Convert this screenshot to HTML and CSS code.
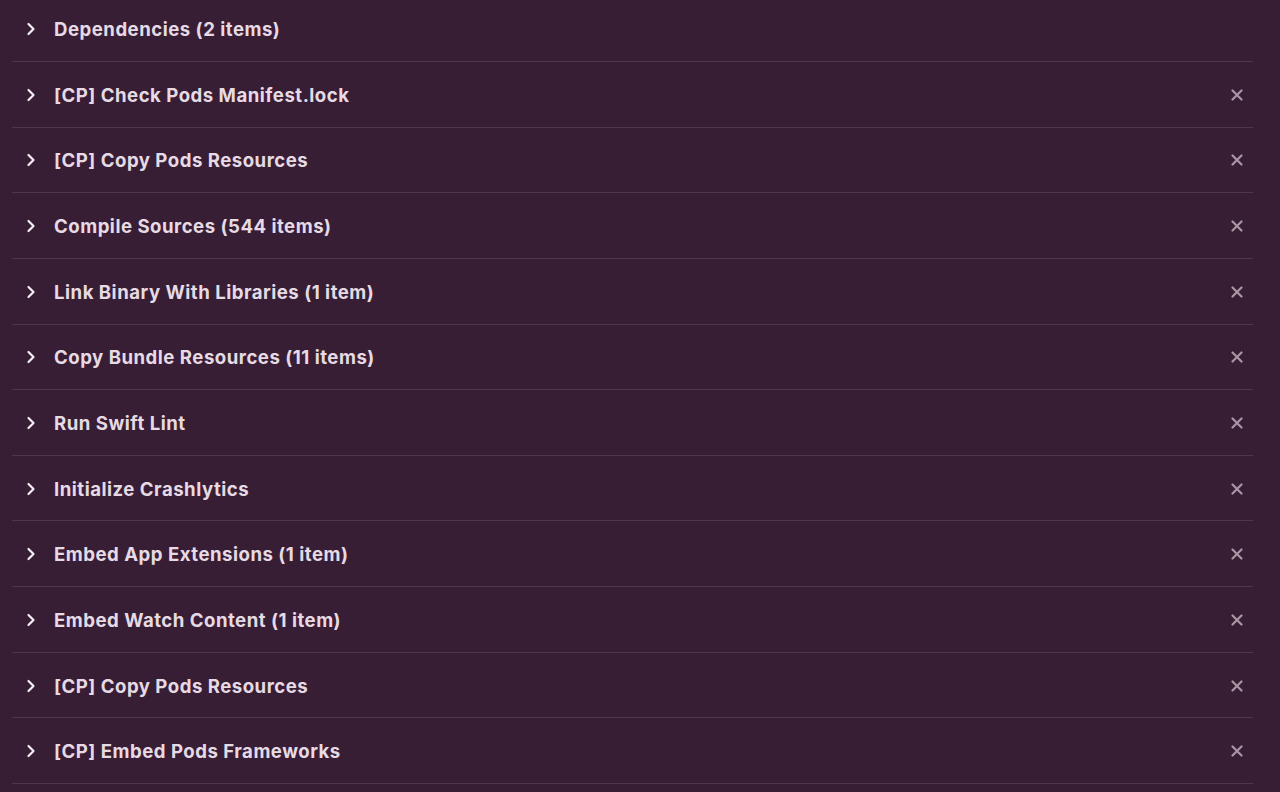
FILE: index.html
```
<!DOCTYPE html>
<html>
<head>
<meta charset="utf-8">
<link rel="stylesheet" href="styles.css">
</head>
<body>
<ul class="phases">
  <li class="phase first"><span class="chev"><svg viewBox="0 0 10 14" width="10" height="14"><path d="M2.5 2 L7.5 7 L2.5 12" fill="none" stroke="currentColor" stroke-width="2.2" stroke-linecap="round" stroke-linejoin="round"/></svg></span><span class="title">Dependencies (2 items)</span></li>
  <li class="phase"><span class="chev"><svg viewBox="0 0 10 14" width="10" height="14"><path d="M2.5 2 L7.5 7 L2.5 12" fill="none" stroke="currentColor" stroke-width="2.2" stroke-linecap="round" stroke-linejoin="round"/></svg></span><span class="title">[CP] Check Pods Manifest.lock</span><span class="close"><svg viewBox="0 0 12 12" width="12" height="12"><path d="M1.5 1.5 L10.5 10.5 M10.5 1.5 L1.5 10.5" stroke="currentColor" stroke-width="2.2" stroke-linecap="round"/></svg></span></li>
  <li class="phase"><span class="chev"><svg viewBox="0 0 10 14" width="10" height="14"><path d="M2.5 2 L7.5 7 L2.5 12" fill="none" stroke="currentColor" stroke-width="2.2" stroke-linecap="round" stroke-linejoin="round"/></svg></span><span class="title">[CP] Copy Pods Resources</span><span class="close"><svg viewBox="0 0 12 12" width="12" height="12"><path d="M1.5 1.5 L10.5 10.5 M10.5 1.5 L1.5 10.5" stroke="currentColor" stroke-width="2.2" stroke-linecap="round"/></svg></span></li>
  <li class="phase"><span class="chev"><svg viewBox="0 0 10 14" width="10" height="14"><path d="M2.5 2 L7.5 7 L2.5 12" fill="none" stroke="currentColor" stroke-width="2.2" stroke-linecap="round" stroke-linejoin="round"/></svg></span><span class="title">Compile Sources (544 items)</span><span class="close"><svg viewBox="0 0 12 12" width="12" height="12"><path d="M1.5 1.5 L10.5 10.5 M10.5 1.5 L1.5 10.5" stroke="currentColor" stroke-width="2.2" stroke-linecap="round"/></svg></span></li>
  <li class="phase"><span class="chev"><svg viewBox="0 0 10 14" width="10" height="14"><path d="M2.5 2 L7.5 7 L2.5 12" fill="none" stroke="currentColor" stroke-width="2.2" stroke-linecap="round" stroke-linejoin="round"/></svg></span><span class="title">Link Binary With Libraries (1 item)</span><span class="close"><svg viewBox="0 0 12 12" width="12" height="12"><path d="M1.5 1.5 L10.5 10.5 M10.5 1.5 L1.5 10.5" stroke="currentColor" stroke-width="2.2" stroke-linecap="round"/></svg></span></li>
  <li class="phase"><span class="chev"><svg viewBox="0 0 10 14" width="10" height="14"><path d="M2.5 2 L7.5 7 L2.5 12" fill="none" stroke="currentColor" stroke-width="2.2" stroke-linecap="round" stroke-linejoin="round"/></svg></span><span class="title">Copy Bundle Resources (11 items)</span><span class="close"><svg viewBox="0 0 12 12" width="12" height="12"><path d="M1.5 1.5 L10.5 10.5 M10.5 1.5 L1.5 10.5" stroke="currentColor" stroke-width="2.2" stroke-linecap="round"/></svg></span></li>
  <li class="phase"><span class="chev"><svg viewBox="0 0 10 14" width="10" height="14"><path d="M2.5 2 L7.5 7 L2.5 12" fill="none" stroke="currentColor" stroke-width="2.2" stroke-linecap="round" stroke-linejoin="round"/></svg></span><span class="title">Run Swift Lint</span><span class="close"><svg viewBox="0 0 12 12" width="12" height="12"><path d="M1.5 1.5 L10.5 10.5 M10.5 1.5 L1.5 10.5" stroke="currentColor" stroke-width="2.2" stroke-linecap="round"/></svg></span></li>
  <li class="phase"><span class="chev"><svg viewBox="0 0 10 14" width="10" height="14"><path d="M2.5 2 L7.5 7 L2.5 12" fill="none" stroke="currentColor" stroke-width="2.2" stroke-linecap="round" stroke-linejoin="round"/></svg></span><span class="title">Initialize Crashlytics</span><span class="close"><svg viewBox="0 0 12 12" width="12" height="12"><path d="M1.5 1.5 L10.5 10.5 M10.5 1.5 L1.5 10.5" stroke="currentColor" stroke-width="2.2" stroke-linecap="round"/></svg></span></li>
  <li class="phase"><span class="chev"><svg viewBox="0 0 10 14" width="10" height="14"><path d="M2.5 2 L7.5 7 L2.5 12" fill="none" stroke="currentColor" stroke-width="2.2" stroke-linecap="round" stroke-linejoin="round"/></svg></span><span class="title">Embed App Extensions (1 item)</span><span class="close"><svg viewBox="0 0 12 12" width="12" height="12"><path d="M1.5 1.5 L10.5 10.5 M10.5 1.5 L1.5 10.5" stroke="currentColor" stroke-width="2.2" stroke-linecap="round"/></svg></span></li>
  <li class="phase"><span class="chev"><svg viewBox="0 0 10 14" width="10" height="14"><path d="M2.5 2 L7.5 7 L2.5 12" fill="none" stroke="currentColor" stroke-width="2.2" stroke-linecap="round" stroke-linejoin="round"/></svg></span><span class="title">Embed Watch Content (1 item)</span><span class="close"><svg viewBox="0 0 12 12" width="12" height="12"><path d="M1.5 1.5 L10.5 10.5 M10.5 1.5 L1.5 10.5" stroke="currentColor" stroke-width="2.2" stroke-linecap="round"/></svg></span></li>
  <li class="phase"><span class="chev"><svg viewBox="0 0 10 14" width="10" height="14"><path d="M2.5 2 L7.5 7 L2.5 12" fill="none" stroke="currentColor" stroke-width="2.2" stroke-linecap="round" stroke-linejoin="round"/></svg></span><span class="title">[CP] Copy Pods Resources</span><span class="close"><svg viewBox="0 0 12 12" width="12" height="12"><path d="M1.5 1.5 L10.5 10.5 M10.5 1.5 L1.5 10.5" stroke="currentColor" stroke-width="2.2" stroke-linecap="round"/></svg></span></li>
  <li class="phase"><span class="chev"><svg viewBox="0 0 10 14" width="10" height="14"><path d="M2.5 2 L7.5 7 L2.5 12" fill="none" stroke="currentColor" stroke-width="2.2" stroke-linecap="round" stroke-linejoin="round"/></svg></span><span class="title">[CP] Embed Pods Frameworks</span><span class="close"><svg viewBox="0 0 12 12" width="12" height="12"><path d="M1.5 1.5 L10.5 10.5 M10.5 1.5 L1.5 10.5" stroke="currentColor" stroke-width="2.2" stroke-linecap="round"/></svg></span></li>
</ul>
</body>
</html>
```
FILE: styles.css
```
html, body {
  margin: 0;
  padding: 0;
  background: #381e35;
  height: 100%;
  overflow: hidden;
}
body {
  font-family: Inter, "Noto Sans", sans-serif;
  color: #e6dbe4;
}
.phases {
  list-style: none;
  margin: 0;
  padding: 0 27px 0 12px;
}
.phase {
  box-sizing: border-box;
  height: 65.65px;
  display: flex;
  align-items: center;
  border-bottom: 1px solid #4e374b;
  padding-left: 14px;
  padding-top: 1px;
}
.phase.first {
  height: 62px;
  padding-top: 0;
  padding-bottom: 4px;
}
.chev {
  display: flex;
  width: 28px;
  color: #f4eef3;
}
.title {
  flex: 1;
  font-size: 18.6px;
  font-weight: 700;
  letter-spacing: 0.5px;
}
.close {
  display: flex;
  width: 12px;
  margin-right: 10px;
  color: #a996a5;
}
```
